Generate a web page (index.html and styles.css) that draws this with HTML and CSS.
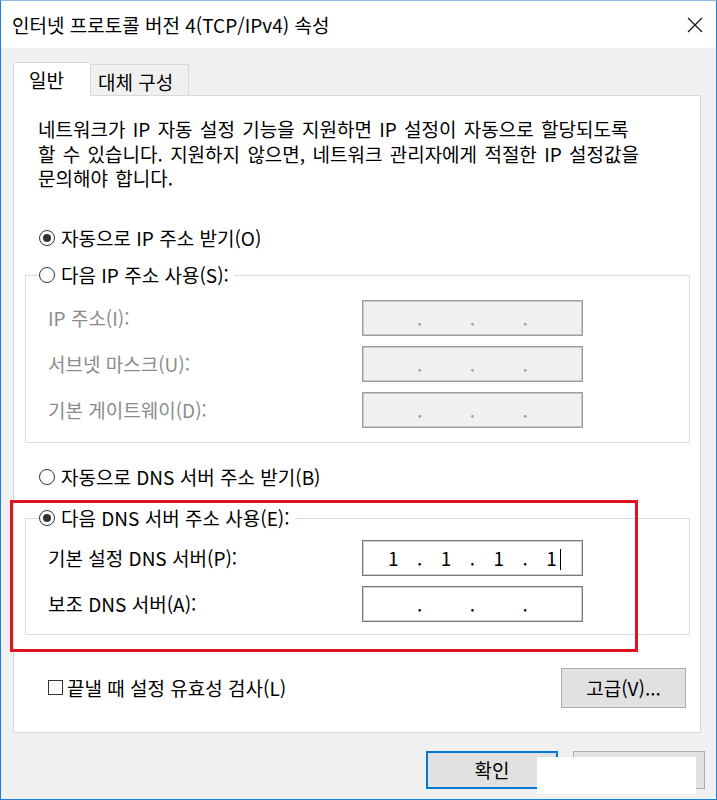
FILE: index.html
```html
<!DOCTYPE html>
<html lang="ko">
<head>
    <meta charset="UTF-8">
    <title>인터넷 프로토콜 버전 4(TCP/IPv4) 속성</title>
    <link rel="stylesheet" href="styles.css">
</head>
<body>
    <div class="window">
        <div class="titlebar">
            <span class="title">인터넷 프로토콜 버전 4(TCP/IPv4) 속성</span>
            <svg class="close" width="16" height="16" viewBox="0 0 16 16">
                <path d="M1 1L15 15M15 1L1 15" stroke="#111" stroke-width="1.2" fill="none"/>
            </svg>
        </div>
        <div class="client">
            <div class="tabs">
                <div class="tab active">일반</div>
                <div class="tab">대체 구성</div>
            </div>
            <div class="panel">
                <p class="intro">네트워크가 IP 자동 설정 기능을 지원하면 IP 설정이 자동으로 할당되도록<br>할 수 있습니다. 지원하지 않으면, 네트워크 관리자에게 적절한 IP 설정값을<br>문의해야 합니다.</p>

                <div class="radio-row row-ip-auto"><span class="radio checked"></span>자동으로 IP 주소 받기(O)</div>

                <div class="group group-ip">
                    <div class="group-head"><span class="radio"></span>다음 IP 주소 사용(S):</div>
                    <div class="field disabled">
                        <span class="field-label">IP 주소(I):</span>
                        <div class="ip"><span class="oct"></span><span class="dot">.</span><span class="oct"></span><span class="dot">.</span><span class="oct"></span><span class="dot">.</span><span class="oct"></span></div>
                    </div>
                    <div class="field disabled">
                        <span class="field-label">서브넷 마스크(U):</span>
                        <div class="ip"><span class="oct"></span><span class="dot">.</span><span class="oct"></span><span class="dot">.</span><span class="oct"></span><span class="dot">.</span><span class="oct"></span></div>
                    </div>
                    <div class="field disabled">
                        <span class="field-label">기본 게이트웨이(D):</span>
                        <div class="ip"><span class="oct"></span><span class="dot">.</span><span class="oct"></span><span class="dot">.</span><span class="oct"></span><span class="dot">.</span><span class="oct"></span></div>
                    </div>
                </div>

                <div class="radio-row row-dns-auto"><span class="radio"></span>자동으로 DNS 서버 주소 받기(B)</div>

                <div class="group group-dns">
                    <div class="group-head"><span class="radio checked"></span>다음 DNS 서버 주소 사용(E):</div>
                    <div class="field">
                        <span class="field-label">기본 설정 DNS 서버(P):</span>
                        <div class="ip"><span class="oct">1</span><span class="dot">.</span><span class="oct">1</span><span class="dot">.</span><span class="oct">1</span><span class="dot">.</span><span class="oct">1<span class="caret"></span></span></div>
                    </div>
                    <div class="field">
                        <span class="field-label">보조 DNS 서버(A):</span>
                        <div class="ip"><span class="oct"></span><span class="dot">.</span><span class="oct"></span><span class="dot">.</span><span class="oct"></span><span class="dot">.</span><span class="oct"></span></div>
                    </div>
                </div>

                <div class="options-row">
                    <div class="check-row"><span class="checkbox"></span>끝낼 때 설정 유효성 검사(L)</div>
                    <button class="btn btn-advanced">고급(V)...</button>
                </div>
            </div>
            <div class="footer">
                <button class="btn btn-default">확인</button>
                <button class="btn"></button>
            </div>
        </div>
        <div class="annotation"></div>
        <div class="redaction"></div>
    </div>
</body>
</html>
```

FILE: styles.css
```css
body {
    margin: 0;
    font-family: "Noto Sans CJK KR", "Noto Sans", sans-serif;
    font-size: 19px;
    color: #000;
    background: #fff;
}
.window {
    position: relative;
    width: 717px;
    height: 800px;
    box-sizing: border-box;
    border: 1px solid #1c7fd6;
    border-top-color: #8cbbe6;
    background: #f0f0f0;
    display: flex;
    flex-direction: column;
}
.titlebar {
    height: 47px;
    flex: none;
    background: #fff;
    display: flex;
    align-items: center;
    justify-content: space-between;
    padding: 0 13px 0 11px;
}
.close {
    display: block;
}
.client {
    flex: 1;
    padding: 14px 15px 0 12px;
}

/* tabs */
.tabs {
    display: flex;
    align-items: flex-end;
    height: 33px;
}
.tab {
    box-sizing: border-box;
    height: 31px;
    border: 1px solid #d9d9d9;
    border-bottom: 0;
    display: flex;
    align-items: center;
    line-height: 1;
}
.tab.active {
    position: relative;
    z-index: 1;
    width: 78px;
    height: 34px;
    margin-bottom: -1px;
    padding: 0 0 1px 15px;
    background: #fff;
}
.tab:not(.active) {
    width: 98px;
    border-left: 0;
    padding-left: 7px;
    padding-top: 2px;
}

/* panel */
.panel {
    background: #fff;
    border: 1px solid #d9d9d9;
    padding: 21px 10px 24px 11px;
}
.intro {
    margin: 0 0 32px;
    padding-left: 13px;
    line-height: 24.5px;
    word-spacing: 2px;
}
.radio-row {
    height: 30px;
    display: flex;
    align-items: center;
    padding-left: 14px;
}
.row-dns-auto {
    margin-top: 19px;
}
.radio {
    width: 16px;
    height: 16px;
    box-sizing: border-box;
    border: 1px solid #333;
    border-radius: 50%;
    margin-right: 6px;
    display: inline-flex;
    align-items: center;
    justify-content: center;
    flex: none;
}
.radio.checked::after {
    content: "";
    width: 8px;
    height: 8px;
    border-radius: 50%;
    background: #333;
}
.group {
    border: 1px solid #dcdcdc;
    padding: 0 0 9px 22px;
}
.group-ip {
    margin-top: 22px;
}
.group-dns {
    margin-top: 26px;
    padding-bottom: 7px;
}
.group-head {
    height: 24px;
    display: flex;
    align-items: center;
    width: fit-content;
    margin: -13px 0 8px -9px;
    padding-right: 5px;
    background: #fff;
}
.group-dns .group-head {
    margin-bottom: 5px;
}
.field {
    height: 46px;
    display: flex;
    align-items: center;
}
.field-label {
    width: 314px;
}
.ip {
    width: 221px;
    height: 36px;
    box-sizing: border-box;
    border: 1px solid #7a7a7a;
    box-shadow: inset 0 0 0 1px #d0d0d0;
    background: #fff;
    padding: 0 8px;
    display: flex;
    align-items: center;
}
.oct {
    flex: 1;
    text-align: center;
}
.dot {
    width: 8px;
    text-align: center;
}
.caret {
    display: inline-block;
    width: 1px;
    height: 21px;
    margin-left: 3px;
    margin-right: -4px;
    background: #000;
    vertical-align: -4px;
}
.field.disabled {
    color: #8c8c8c;
}
.field.disabled .ip {
    background: #f0f0f0;
    border-color: #9c9c9c;
    box-shadow: inset 0 0 0 1px #c9c9c9;
}
.field.disabled .dot {
    color: #9a9a9a;
}

/* bottom rows */
.options-row {
    margin-top: 33px;
    height: 40px;
    display: flex;
    align-items: center;
    justify-content: space-between;
    padding-left: 23px;
}
.check-row {
    display: flex;
    align-items: center;
}
.checkbox {
    width: 15px;
    height: 15px;
    box-sizing: border-box;
    border: 1px solid #333;
    margin-right: 4px;
}
.btn {
    font-family: inherit;
    font-size: 19px;
    color: #000;
    background: #e1e1e1;
    border: 1px solid #adadad;
    padding: 0;
}
.btn-advanced {
    width: 125px;
    height: 40px;
    margin-right: 4px;
}
.footer {
    display: flex;
    justify-content: flex-end;
    gap: 15px;
    margin: 18px -4px 0 0;
}
.footer .btn {
    width: 132px;
    height: 38px;
}
.btn-default {
    border: 2px solid #0078d7;
}

/* overlays on the screenshot */
.annotation {
    position: absolute;
    left: 9px;
    top: 499px;
    width: 628px;
    height: 152px;
    box-sizing: border-box;
    border: 3px solid #e0141e;
}
.redaction {
    position: absolute;
    left: 536px;
    top: 756px;
    width: 159px;
    height: 37px;
    background: #fff;
}
```
